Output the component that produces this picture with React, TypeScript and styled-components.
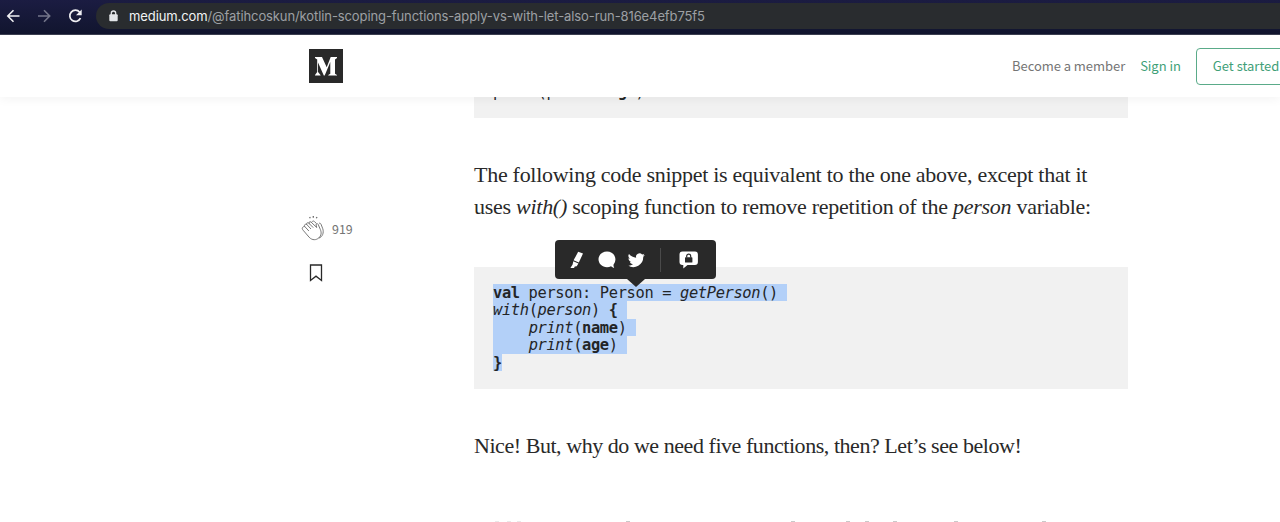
import React from "react";
import styled, { createGlobalStyle } from "styled-components";

const GlobalStyle = createGlobalStyle`
  * {
    box-sizing: border-box;
  }
  body {
    margin: 0;
    background: #fff;
    overflow: hidden;
  }
`;

const Page = styled.div`
  width: 1280px;
  height: 522px;
  overflow: hidden;
  display: flex;
  flex-direction: column;
  background: #fff;
`;

const BrowserBar = styled.div`
  flex: none;
  height: 35px;
  padding: 3px 0 5px 5px;
  display: flex;
  background: linear-gradient(#1b1c42, #11152e);
  border-bottom: 1px solid #3c3f52;
`;

const NavIcons = styled.div`
  width: 91px;
  display: flex;
  align-items: center;
  gap: 15px;
`;

const AddressBar = styled.div`
  flex: 1;
  display: flex;
  align-items: center;
  padding-left: 13px;
  border-radius: 14px 0 0 14px;
  background: #292c2f;
`;

const Url = styled.div`
  margin-left: 11px;
  font: 13px/27px Inter, sans-serif;
  letter-spacing: -0.1px;
  white-space: nowrap;
  color: #9da0a4;
`;

const Domain = styled.span`
  color: #f1f3f4;
`;

const Header = styled.header`
  flex: none;
  height: 62px;
  padding-left: 309px;
  display: flex;
  align-items: center;
  position: relative;
  background: #fff;
  box-shadow: 0 2px 10px rgba(0, 0, 0, 0.05);
`;

const Logo = styled.div`
  width: 34px;
  height: 34px;
`;

const HeaderLinks = styled.div`
  margin-left: 669px;
  display: flex;
  align-items: center;
  flex: none;
  font: 13px/20px "Noto Sans CJK SC", sans-serif;
  white-space: nowrap;
`;

const HeaderLink = styled.a<{ green?: boolean }>`
  margin: -1px 15px 0 0;
  letter-spacing: -0.05px;
  color: ${(props) => (props.green ? "#3f9f78" : "#757575")};
`;

const StartButton = styled.button`
  width: 101px;
  height: 37px;
  padding: 0 0 1px 16px;
  text-align: left;
  font: inherit;
  color: #3f9f78;
  background: none;
  border: 1px solid #5aab89;
  border-radius: 4px;
`;

const Main = styled.main`
  flex: 1;
  min-height: 0;
  display: flex;
`;

const Sidebar = styled.aside`
  width: 474px;
  flex: none;
  padding: 118px 0 0 301px;
`;

const Claps = styled.div`
  display: flex;
  align-items: center;
  gap: 7px;
  height: 27px;
  font: 12.4px/20px "Noto Sans CJK SC", sans-serif;
  color: #757575;
`;

const Bookmark = styled.div`
  margin: 22px 0 0 8px;
  height: 18px;
`;

const Article = styled.article`
  width: 654px;
  display: flex;
  flex-direction: column;
`;

const Code = styled.pre`
  flex: none;
  height: 122px;
  margin: 0;
  padding: 17px 19px;
  background: #f1f1f1;
  font: 15.4px/17.4px "DejaVu Sans Mono", monospace;
  letter-spacing: -0.36px;
  color: #232527;
`;

const ClippedCode = styled(Code)`
  height: 21px;
  padding: 0 19px 17px;
  overflow: hidden;
  display: flex;
  align-items: flex-end;
`;

const CodeLine = styled.div`
  height: 17.4px;
`;

const Selected = styled.span<{ trail?: boolean }>`
  display: inline-block;
  vertical-align: top;
  height: 17.4px;
  line-height: 19.4px;
  padding-right: ${(props) => (props.trail ? 9 : 0)}px;
  background: #b3d0f8;
`;

const Snippet = styled.div`
  position: relative;
  margin-top: 44px;
  height: 122px;
`;

const Paragraph = styled.p`
  margin: 41px 0 0;
  font: 22px/32px "Liberation Serif", serif;
  color: #292929;
  white-space: nowrap;
`;

const TextLine = styled.span<{ spacing: number }>`
  display: block;
  letter-spacing: ${(props) => props.spacing}px;
`;

const Toolbar = styled.div`
  position: absolute;
  left: 81px;
  top: -27px;
  width: 161px;
  height: 39px;
  padding-left: 15px;
  display: flex;
  align-items: center;
  background: #292929;
  border-radius: 4px;

  &::after {
    content: "";
    position: absolute;
    left: 72px;
    top: 39px;
    border: 9px solid transparent;
    border-top: 8px solid #292929;
    border-bottom: 0;
  }
`;

const Divider = styled.div`
  width: 1px;
  height: 24px;
  margin: 0 18px 0 15px;
  background: #4a4a4a;
`;

const NextLine = styled.div`
  margin-top: auto;
  height: 1px;
  flex: none;
`;

const Icon = styled.svg<{ gap?: number }>`
  display: block;
  flex: none;
  margin-left: ${(props) => props.gap || 0}px;
`;

// tops of the letters of the line that starts at the fold
const nextLineTops = [497, 509, 519, 628, 793, 848, 867, 895, 956, 1044];

function BrowserChrome() {
  return (
    <BrowserBar>
      <NavIcons>
        <Icon width="16" height="16" viewBox="0 0 16 16" fill="none" stroke="#f0f0f3" strokeWidth="1.6">
          <path d="M14.500 8H3M8.500 2.300 2.800 8 8.500 13.700" />
        </Icon>
        <Icon width="16" height="16" viewBox="0 0 16 16" fill="none" stroke="#74768a" strokeWidth="1.6">
          <path d="M2 8h11.500M8 2.300 13.700 8 8 13.700" />
        </Icon>
        <Icon width="16" height="16" viewBox="0 0 16 16" fill="none" stroke="#f0f0f3" strokeWidth="1.7">
          <path d="M13.500 10.200A5.600 5.600 0 1 1 12.700 4.200" />
          <path d="M14.700 1.500v5.800H9z" fill="#f0f0f3" stroke="none" />
        </Icon>
      </NavIcons>
      <AddressBar>
        <Icon width="9" height="12" viewBox="0 0 9 12">
          <path d="M2.300 5V3.200a2.200 2.200 0 0 1 4.400 0V5" fill="none" stroke="#e3e5e8" strokeWidth="1.3" />
          <rect x="0.3" y="4.3" width="8.4" height="7" rx="1" fill="#e3e5e8" />
        </Icon>
        <Url>
          <Domain>medium.com</Domain>/@fatihcoskun/kotlin-scoping-functions-apply-vs-with-let-also-run-816e4efb75f5
        </Url>
      </AddressBar>
    </BrowserBar>
  );
}

function SelectionToolbar() {
  return (
    <Toolbar>
      <Icon width="14" height="18" viewBox="0 0 14 18" fill="#fff">
        <path d="M8.200.8 13 2.600 8.800 11.600 3.600 9.300z" />
        <path d="M3.300 10.200 8.400 12.400 6.700 15.300 4.800 15.600 4 16.900 0.400 16.900 2.600 13.500z" />
      </Icon>
      <Icon gap={14} width="18" height="18" viewBox="0 0 18 18" fill="#fff">
        <path d="M9 .6C4.300.6.500 4 .5 8.300s3.600 7.900 8.500 7.900c1.500 0 2.900-.4 4-1 .9.900 2.100 1.500 3.200 1.500-.6-.8-.8-2-.7-3A7.600 7.600 0 0 0 17.400 8.300C17.400 4 13.700.6 9 .6z" />
      </Icon>
      <Icon gap={12} width="17" height="18" viewBox="0 0 24 24" fill="#fff">
        <path d="M23.600 4.900a9.700 9.700 0 0 1-2.800.8 4.900 4.900 0 0 0 2.200-2.700 9.900 9.900 0 0 1-3.100 1.200A4.900 4.900 0 0 0 11.500 8.700 14 14 0 0 1 1.400 3.500a4.900 4.900 0 0 0 1.500 6.600 4.900 4.900 0 0 1-2.200-.6 4.900 4.900 0 0 0 3.900 4.900 5 5 0 0 1-2.200.1 4.900 4.900 0 0 0 4.600 3.400A9.900 9.900 0 0 1 0 19.900a14 14 0 0 0 21.500-12.400 10 10 0 0 0 2.100-2.600z" />
      </Icon>
      <Divider />
      <Icon width="20" height="18" viewBox="0 0 20 18">
        <path d="M3.500.6h12.500C18 .6 18.900 1.600 18.900 3.600v7.300c0 2-1 3-3 3H8.500L4.300 17.500v-3.600h-.8c-2 0-3-1-3-3V3.600c0-2 1-3 3-3z" fill="#fff" />
        <rect x="6" y="6.300" width="7.400" height="5.200" rx=".6" fill="#292929" />
        <path d="M7.700 6.500V5.200a2 2 0 0 1 4 0v1.300" fill="none" stroke="#292929" strokeWidth="1.200" />
      </Icon>
    </Toolbar>
  );
}

function App() {
  return (
    <>
      <GlobalStyle />
      <Page>
        <BrowserChrome />
        <Header>
          <Logo>
            <Icon width="34" height="34" viewBox="0 0 34 34">
              <rect width="34" height="34" fill="#292929" />
              <path d="M6 8h7l4.700 10.300L21.700 8H28v1l-2 1.500v14.200l2 1.300v.5h-8.700V26l2-1.300V13l-5.600 13.500h-.9L9 13.500v9.500l2.500 3v.5H6V26l2.200-3V10.500L6 9z" fill="#fff" />
            </Icon>
          </Logo>
          <HeaderLinks>
            <HeaderLink>Become a member</HeaderLink>
            <HeaderLink green>Sign in</HeaderLink>
            <StartButton>Get started</StartButton>
          </HeaderLinks>
        </Header>
        <Main>
          <Sidebar>
            <Claps>
              <Icon width="24" height="27" viewBox="0 0 24 27" fill="none" stroke="#6b6b6b" strokeWidth="0.9">
                <path d="M8.600 2l.7 1.300M12.300 1v1.800M16 2l-.7 1.300" strokeWidth="1.300" />
                <path d="M1.800 12.300c-1 .8-.5 2 .3 2.900l6 7c3.300 3.500 7.200 2.900 9.700.7 2.700-2.500 2.800-5.300 1.600-8.300l-2.300-5.300c-.7-1.300-2.300-.8-2 .7l.6 2.500-5.700-5.500c-1.500-1-2.600.6-1.500 1.800l-.7-.6C6.300 7 4.800 8.400 6 9.800l-.5-.3C4 8.700 2.700 10.300 3.900 11.700c-1-.5-1.600-.1-2.100.6z" />
                <path d="M8.400 8.800l3.800 3.800M6 9.800l4 4.200M3.900 11.700l4 4.300M11 6.800c.8-1.300 2-.8 2.700 0l1.600 1.600M18 8.300c1-.4 1.700.2 2 .9l1.800 4.600c1.200 4-.2 8-3.900 9.300" />
              </Icon>
              919
            </Claps>
            <Bookmark>
              <Icon width="14" height="18" viewBox="0 0 14 18" fill="none" stroke="#292929" strokeWidth="1.300">
                <path d="M1.500 1h11v15.500L7 12.200 1.500 16.500z" />
              </Icon>
            </Bookmark>
          </Sidebar>
          <Article>
            <ClippedCode>
              <CodeLine>
                print(person.<b>age</b>)
              </CodeLine>
            </ClippedCode>
            <Paragraph>
              <TextLine spacing={-0.28}>The following code snippet is equivalent to the one above, except that it</TextLine>
              <TextLine spacing={-0.27}>
                uses <i>with()</i> scoping function to remove repetition of the <i>person</i> variable:
              </TextLine>
            </Paragraph>
            <Snippet>
              <Code>
                <CodeLine>
                  <Selected trail>
                    <b>val</b> person: Person = <i>getPerson</i>()
                  </Selected>
                </CodeLine>
                <CodeLine>
                  <Selected trail>
                    <i>with</i>(<i>person</i>) <b>{"{"}</b>
                  </Selected>
                </CodeLine>
                <CodeLine>
                  <Selected trail>
                    {"    "}<i>print</i>(<b>name</b>)
                  </Selected>
                </CodeLine>
                <CodeLine>
                  <Selected trail>
                    {"    "}<i>print</i>(<b>age</b>)
                  </Selected>
                </CodeLine>
                <CodeLine>
                  <Selected>
                    <b>{"}"}</b>
                  </Selected>
                </CodeLine>
              </Code>
              <SelectionToolbar />
            </Snippet>
            <Paragraph>
              <TextLine spacing={-0.45}>Nice! But, why do we need five functions, then? Let’s see below!</TextLine>
            </Paragraph>
            <NextLine>
              <Icon width="654" height="1" viewBox="474 0 654 1" fill="#c9c9c9">
                {nextLineTops.map((x) => (
                  <rect key={x} x={x - 2} width="4" height="1" opacity={x < 520 ? 0.4 : 1} />
                ))}
              </Icon>
            </NextLine>
          </Article>
        </Main>
      </Page>
    </>
  );
}

export default App;
